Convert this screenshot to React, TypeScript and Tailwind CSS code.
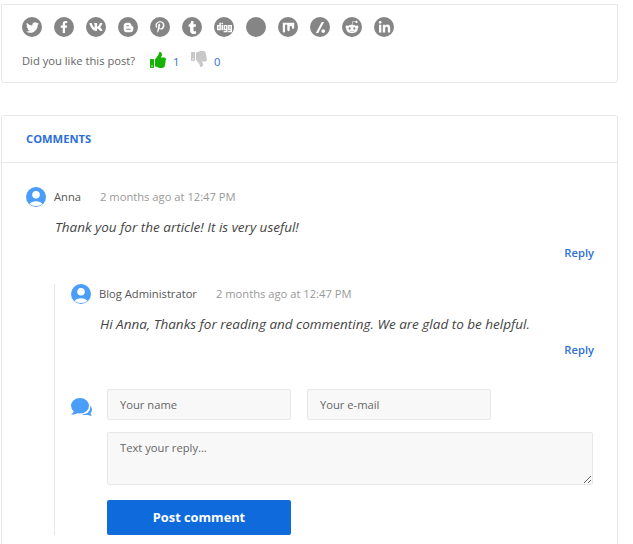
import { FaTwitter, FaFacebookF, FaVk, FaBloggerB, FaPinterestP, FaTumblr, FaDigg, FaMix, FaRedditAlien, FaLinkedinIn, FaThumbsUp, FaThumbsDown } from "react-icons/fa";
import { SiSlashdot } from "react-icons/si";

const icons = [
  { I: FaTwitter, s: 13 },
  { I: FaFacebookF, s: 12 },
  { I: FaVk, s: 14 },
  { I: FaBloggerB, s: 11 },
  { I: FaPinterestP, s: 12 },
  { I: FaTumblr, s: 13 },
  { I: FaDigg, s: 15 },
  { I: null, s: 0 },
  { I: FaMix, s: 13 },
  { I: SiSlashdot, s: 11 },
  { I: FaRedditAlien, s: 14 },
  { I: FaLinkedinIn, s: 13 },
];

function Avatar() {
  return (
    <svg width="20" height="20" viewBox="0 0 20 20" className="shrink-0">
      <circle cx="10" cy="10" r="10" fill="#4a9df8" />
      <circle cx="10" cy="7.8" r="3.8" fill="#fff" />
      <path d="M3.6 17a7 4.6 0 0 1 12.8 0A9 9 0 0 1 10 19a9 9 0 0 1-6.4-2z" fill="#fff" />
    </svg>
  );
}

function Head({ name, gap }: { name: string; gap: string }) {
  return (
    <div className="flex items-center h-5">
      <Avatar />
      <span className={`ml-2 text-[11.2px] text-[#555] ${gap}`}>{name}</span>
      <span className="text-[11.2px] text-[#999]">2 months ago at 12:47 PM</span>
    </div>
  );
}

function Reply() {
  return <div className="text-right -mr-px text-[11.2px] font-semibold text-[#2d6fd6] leading-4">Reply</div>;
}

export default function App() {
  return (
    <div className="h-[544px] w-[633px] overflow-hidden bg-white pt-1 pl-px font-['Open_Sans',sans-serif]">
      <div className="w-[617px] h-[79px] border border-[#e8e8e8] rounded-b-[3px] pt-3 pl-[20px]">
        <div className="flex gap-3">
          {icons.map(({ I, s }, i) => (
            <div key={i} className="w-5 h-5 rounded-full bg-[#858585] flex items-center justify-center text-white">
              {I && <I size={s} />}
            </div>
          ))}
        </div>
        <div className="flex items-center mt-[14px] h-5 text-[11.2px]">
          <span className="text-[#666] w-[128px]">Did you like this post?</span>
          <FaThumbsUp size={16} className="text-[#15b300] -mt-0.5" />
          <span className="ml-[7px] w-[18px] mt-0.5 text-[#2d6fd6]">1</span>
          <FaThumbsDown size={16} className="text-[#c8c8c8] -mt-1" />
          <span className="ml-[7px] mt-0.5 text-[#2d6fd6]">0</span>
        </div>
      </div>

      <div className="mt-[32px] w-[617px] h-[500px] border border-[#e8e8e8] rounded-t-[3px]">
        <div className="h-[47px] border-b border-[#e8e8e8] pl-[24px] pt-[15px] text-[11.2px] leading-4 font-bold text-[#2d6fd6]">COMMENTS</div>
        <div className="pl-[24px] pr-[24px] pt-[24px]">
          <Head name="Anna" gap="mr-[19px]" />
          <p className="mt-[10px] ml-[29px] text-[13.5px] italic leading-5 text-[#444]">Thank you for the article! It is very useful!</p>
          <div className="mt-[8px]"><Reply /></div>
          <div className="mt-[23px] ml-[28px] border-l border-[#e8e8e8] pl-[16px] h-[251px]">
            <Head name="Blog Administrator" gap="mr-[19px]" />
            <p className="mt-[10px] ml-[29px] text-[13.5px] italic leading-5 text-[#444]">Hi Anna, Thanks for reading and commenting. We are glad to be helpful.</p>
            <div className="mt-[8px]"><Reply /></div>
            <div className="flex mt-[31px]">
              <svg width="21" height="19" viewBox="0 0 21 19" className="shrink-0 mt-[9px]">
                <path d="M9 0a9 7.8 0 0 1 9 7.8 9 7.8 0 0 1-9 7.8c-1 0-1.800-.1-2.700-.4C5 16.200 2.500 16.600 0 16.400c1.500-.8 2.500-2 2.700-3.200A7.600 7.600 0 0 1 0 7.800 9 7.800 0 0 1 9 0z" fill="#4a9df8" />
                <path d="M18.900 7.500c1.300 1.200 2.100 2.700 2.100 4.200 0 1.300-.6 2.500-1.500 3.400.2 1 .7 2 1.500 2.700-1.700.1-3.400-.3-4.600-1-.8.2-1.500.3-2.400.3-1.200 0-2.300-.2-3.300-.7 4 .1 8-2 8.500-6.200.1-1 0-2-.3-2.700z" fill="#4a9df8" />
              </svg>
              <div className="ml-[15px] w-[486px]">
                <div className="flex gap-4">
                  <div className="w-[184px] h-[31px] rounded-[2px] border border-[#e8e8e8] bg-[#f8f8f8] pl-3 pt-px flex items-center text-[11.2px] text-[#666]">Your name</div>
                  <div className="w-[184px] h-[31px] rounded-[2px] border border-[#e8e8e8] bg-[#f8f8f8] pl-3 pt-px flex items-center text-[11.2px] text-[#666]">Your e-mail</div>
                </div>
                <textarea readOnly placeholder="Text your reply..." className="block mt-3 w-[486px] h-[53px] rounded-[2px] border border-[#e8e8e8] bg-[#f8f8f8] px-3 pt-[7px] pb-1 text-[11.2px] leading-4 placeholder:text-[#666] outline-none" />
                <div className="mt-[15px] w-[184px] h-[35px] rounded-[2px] bg-[#0f6bdc] text-white text-[12.8px] font-bold flex items-center justify-center">Post comment</div>
              </div>
            </div>
          </div>
        </div>
      </div>
    </div>
  );
}
